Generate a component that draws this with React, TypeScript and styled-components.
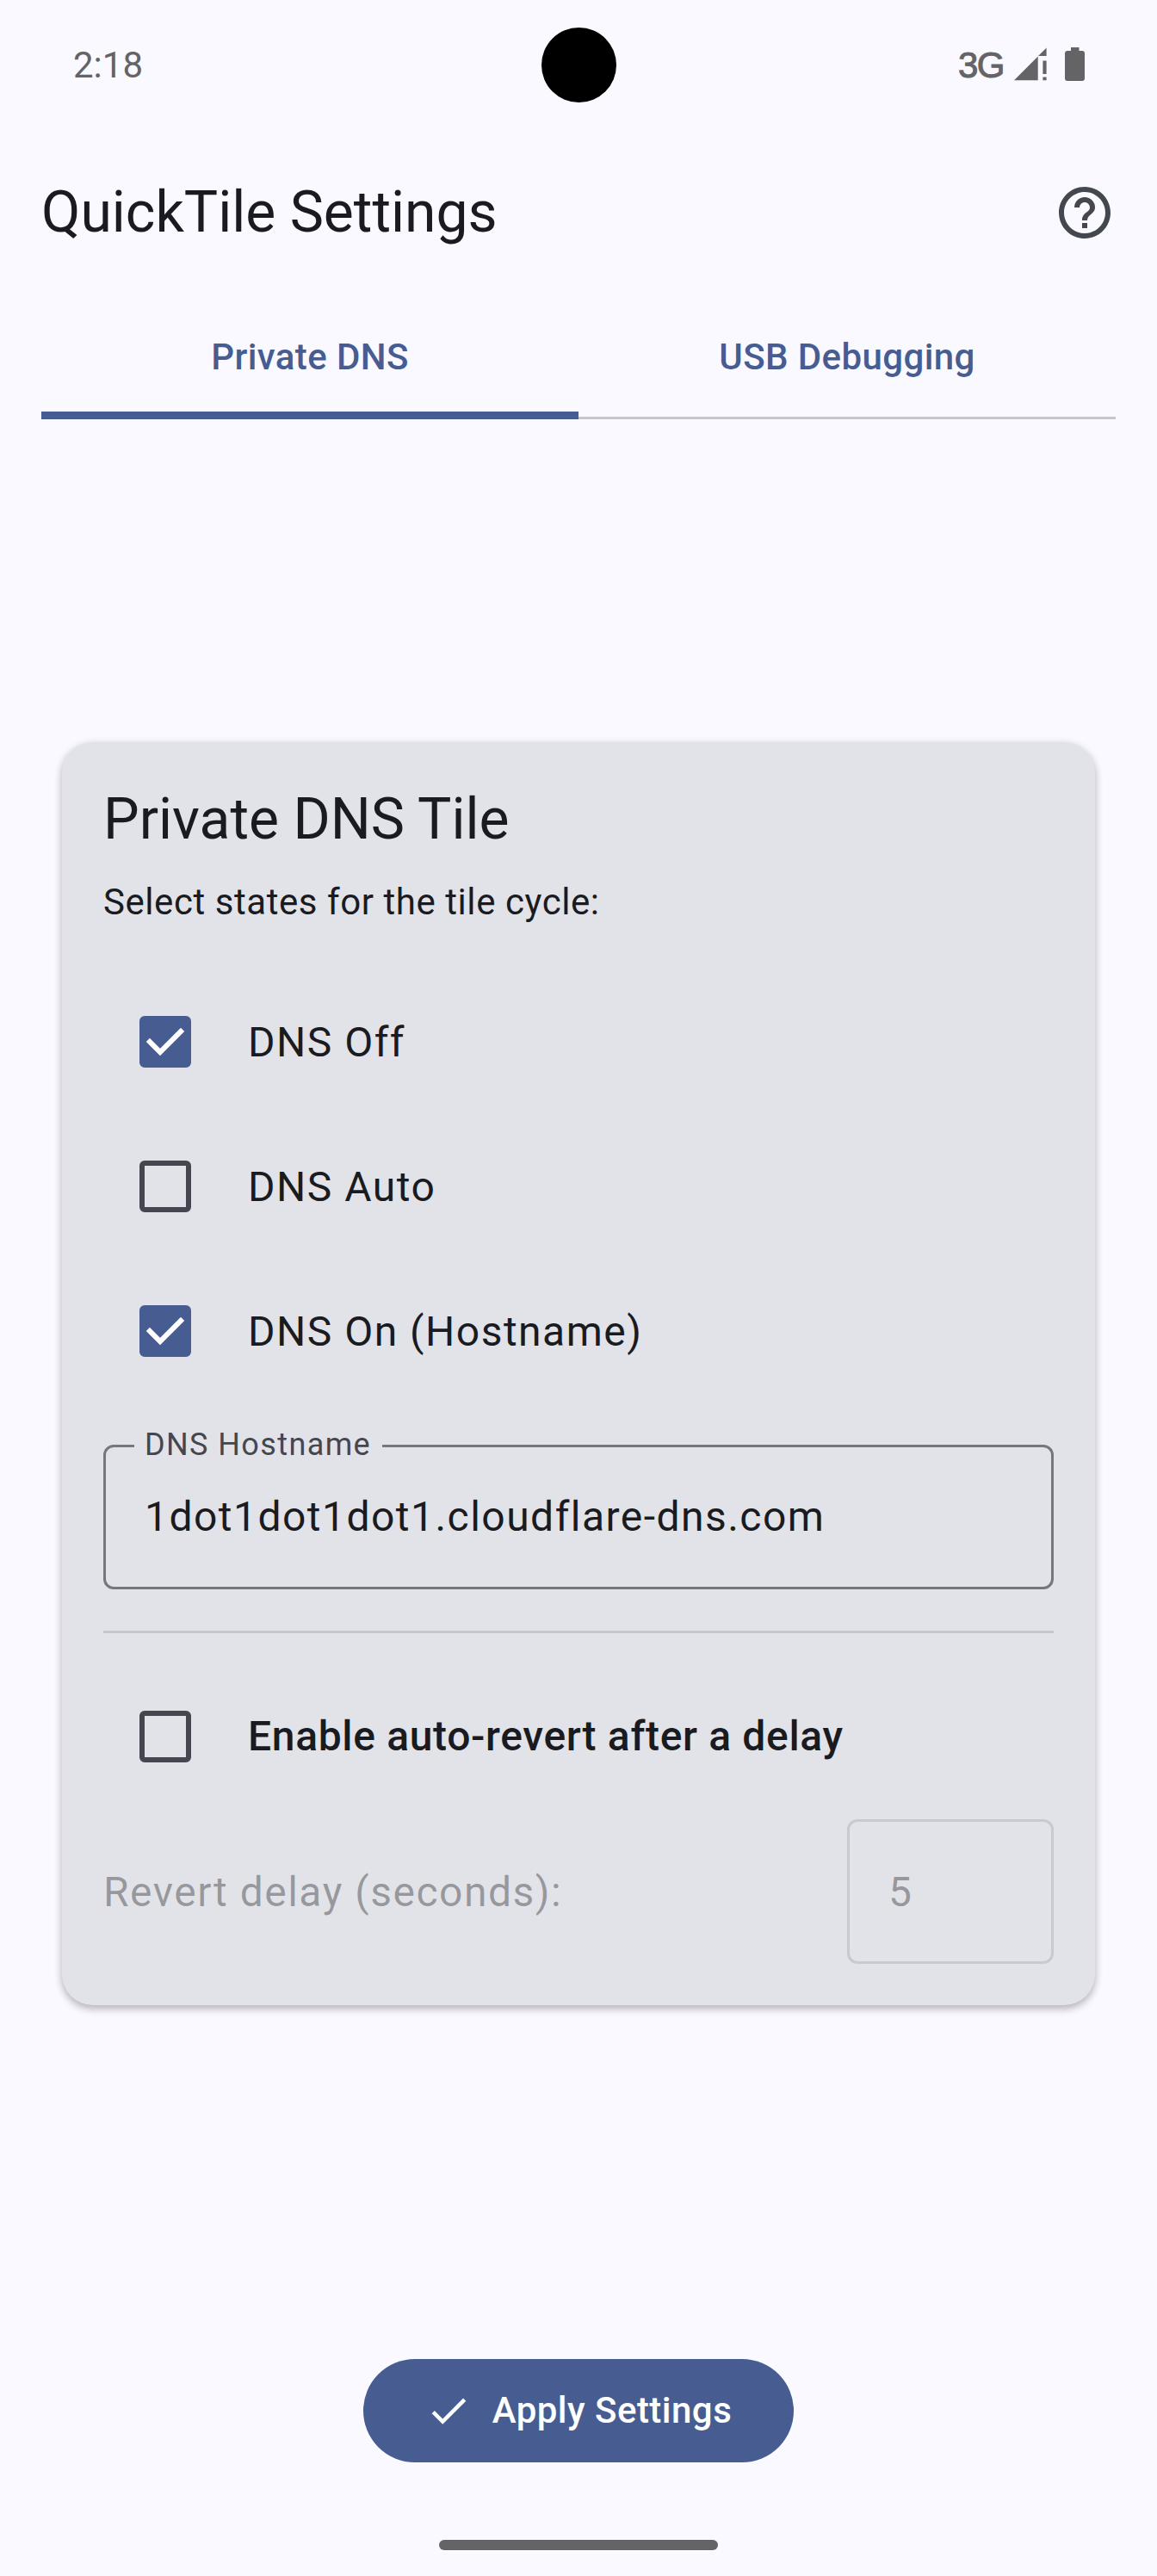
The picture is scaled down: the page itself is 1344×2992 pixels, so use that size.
import React from "react";
import styled, { createGlobalStyle } from "styled-components";

const color = {
  surface: "#f9f9ff",
  container: "#e2e3e8",
  primary: "#475d92",
  onSurface: "#1a1b20",
  onSurfaceVariant: "#44474f",
  outline: "#757780",
  outlineVariant: "#c5c6d0",
  system: "#646466",
};

const GlobalStyle = createGlobalStyle`
  * { box-sizing: border-box; }
  body { margin: 0; background: ${color.surface}; }
`;

const Screen = styled.div`
  position: relative;
  display: flex;
  flex-direction: column;
  width: 1344px;
  height: 2992px;
  background: ${color.surface};
  color: ${color.onSurface};
  font-family: Roboto, "Liberation Sans", sans-serif;
  overflow: hidden;
`;

const StatusBar = styled.header`
  display: flex;
  align-items: center;
  justify-content: space-between;
  height: 150px;
  padding: 0 84px 0 85px;
  color: ${color.system};
`;

const Clock = styled.span`
  padding-top: 2px;
  font-size: 42px;
  line-height: 50px;
`;

const StatusIcons = styled.div`
  display: flex;
  align-items: center;
`;

const Network = styled.span`
  margin-right: 11px;
  padding-top: 2px;
  font-family: "Liberation Sans", Roboto, sans-serif;
  font-size: 42px;
  line-height: 50px;
  letter-spacing: -1.5px;
  -webkit-text-stroke: 1px ${color.system};
`;

const StatusGlyph = styled.svg`
  height: 40px;
  fill: ${color.system};
`;

const Camera = styled.div`
  position: absolute;
  left: 628.5px;
  top: 31.5px;
  width: 87px;
  height: 87px;
  border-radius: 50%;
  background: #000;
`;

const AppBar = styled.div`
  display: flex;
  align-items: center;
  justify-content: space-between;
  height: 194px;
  margin-bottom: -1px;
  padding: 0 48px;
`;

const Title = styled.h1`
  margin: 0;
  font-size: 66px;
  font-weight: 400;
  line-height: 84px;
`;

const HelpIcon = styled.svg`
  width: 72px;
  height: 72px;
  fill: ${color.onSurfaceVariant};
`;

const TabRow = styled.nav`
  display: flex;
  height: 144px;
  margin: 0 48px;
`;

const Tab = styled.button<{ $active?: boolean }>`
  flex: 1;
  padding: 0;
  border: 0;
  background: none;
  color: ${color.primary};
  font: 500 42px/60px Roboto, sans-serif;
  letter-spacing: 0.4px;
  box-shadow: inset 0 ${(p) => (p.$active ? `-9px ${color.primary}` : `-3px ${color.outlineVariant}`)};
`;

const Card = styled.main`
  display: flex;
  flex-direction: column;
  height: 1467px;
  margin: 375px 72px 0;
  padding: 48px;
  border-radius: 36px;
  background: ${color.container};
  box-shadow: 0 5px 8px rgba(60, 40, 50, 0.22), 0 2px 10px rgba(60, 40, 50, 0.16);
`;

const CardTitle = styled.h2`
  margin: 0 0 24px;
  font-size: 66px;
  font-weight: 400;
  line-height: 84px;
`;

const CardText = styled.p`
  margin: 0 0 48px;
  font-size: 42px;
  line-height: 60px;
  letter-spacing: 0.56px;
`;

const OptionRow = styled.label`
  display: flex;
  align-items: center;
  gap: 66px;
  height: 168px;
  padding-left: 42px;
`;

const Box = styled.span<{ $checked?: boolean }>`
  display: flex;
  width: 60px;
  height: 60px;
  border: 6px solid ${(p) => (p.$checked ? color.primary : color.onSurfaceVariant)};
  border-radius: 6px;
  background: ${(p) => (p.$checked ? color.primary : "transparent")};
`;

const Tick = styled.svg`
  flex: none;
  width: 60px;
  height: 60px;
  margin: -6px;
`;

const OptionText = styled.span<{ $strong?: boolean }>`
  padding-top: ${(p) => (p.$strong ? 0 : 2)}px;
  font-size: 48px;
  line-height: 72px;
  font-weight: ${(p) => (p.$strong ? 500 : 400)};
  letter-spacing: ${(p) => (p.$strong ? 0.66 : 1.5)}px;
`;

const HostField = styled.fieldset`
  height: 186px;
  min-width: 0;
  margin: 30px 0 48px;
  padding: 0 0 0 45px;
  border: 3px solid ${color.outline};
  border-radius: 12px;
`;

const HostLabel = styled.legend`
  height: 39px;
  margin-left: -12px;
  padding: 0 13px 0 12px;
  color: ${color.onSurfaceVariant};
  font-size: 36px;
  line-height: 36px;
  letter-spacing: 1.4px;
`;

const FieldValue = styled.div`
  padding-top: 2px;
  font-size: 48px;
  line-height: 72px;
  letter-spacing: 1.5px;
`;

const HostValue = styled(FieldValue)`
  margin-top: 25px;
  letter-spacing: 1.47px;
`;

const Divider = styled.hr`
  width: 100%;
  height: 3px;
  margin: 0 0 36px;
  border: 0;
  background: ${color.outlineVariant};
`;

const DelayRow = styled.div`
  display: flex;
  align-items: center;
  justify-content: space-between;
  height: 168px;
  margin-top: 12px;
  color: rgba(26, 27, 32, 0.38);
`;

const DelayField = styled.div`
  display: flex;
  align-items: center;
  width: 240px;
  height: 168px;
  padding-left: 45px;
  border: 3px solid rgba(26, 27, 32, 0.12);
  border-radius: 12px;
`;

const ApplyButton = styled.button`
  display: flex;
  align-items: center;
  align-self: center;
  gap: 24px;
  height: 120px;
  margin-top: 411px;
  padding: 0 72px;
  border: 0;
  border-radius: 60px;
  background: ${color.primary};
  color: #fff;
  font: 500 42px/60px Roboto, sans-serif;
  letter-spacing: 0.48px;
`;

const HomeBar = styled.div`
  align-self: center;
  width: 324px;
  height: 12px;
  margin-top: 90px;
  border-radius: 6px;
  background: ${color.system};
`;

function Option({ label, checked, strong }: { label: string; checked?: boolean; strong?: boolean }) {
  return (
    <OptionRow>
      <Box $checked={checked}>
        {checked && (
          <Tick viewBox="0 0 20 20" fill="none" stroke="#fff" strokeWidth="2" strokeLinecap="square">
            <path d="M4 10 8 14 16 6" />
          </Tick>
        )}
      </Box>
      <OptionText $strong={strong}>{label}</OptionText>
    </OptionRow>
  );
}

export default function App() {
  return (
    <Screen>
      <GlobalStyle />
      <StatusBar>
        <Clock>2:18</Clock>
        <StatusIcons>
          <Network>3G</Network>
          <StatusGlyph width="40" viewBox="0 0 40 40">
            <path d="M1 38.3 28.7 10.6V38.3ZM29 10 38.6.5V10ZM34.4 15.5h4.2V31h-4.2ZM34.4 34.5h4.2v3.8h-4.2Z" />
          </StatusGlyph>
          <StatusGlyph width="43" viewBox="0 0 43 40">
            <path d="M27 0h9.5v4H40q3 0 3 3v29q0 3-3 3H23q-3 0-3-3V7q0-3 3-3h4Z" />
          </StatusGlyph>
        </StatusIcons>
      </StatusBar>
      <Camera />
      <AppBar>
        <Title>QuickTile Settings</Title>
        <HelpIcon viewBox="0 0 24 24">
          <path d="M11 18h2v-2h-2v2zm1-16C6.48 2 2 6.48 2 12s4.48 10 10 10 10-4.48 10-10S17.52 2 12 2zm0 18c-4.41 0-8-3.59-8-8s3.59-8 8-8 8 3.59 8 8-3.59 8-8 8zm0-14c-2.21 0-4 1.79-4 4h2c0-1.1.9-2 2-2s2 .9 2 2c0 2-3 1.75-3 5h2c0-2.25 3-2.5 3-5 0-2.21-1.79-4-4-4z" />
        </HelpIcon>
      </AppBar>
      <TabRow>
        <Tab $active>Private DNS</Tab>
        <Tab>USB Debugging</Tab>
      </TabRow>
      <Card>
        <CardTitle>Private DNS Tile</CardTitle>
        <CardText>Select states for the tile cycle:</CardText>
        <Option label="DNS Off" checked />
        <Option label="DNS Auto" />
        <Option label="DNS On (Hostname)" checked />
        <HostField>
          <HostLabel>DNS Hostname</HostLabel>
          <HostValue>1dot1dot1dot1.cloudflare-dns.com</HostValue>
        </HostField>
        <Divider />
        <Option label="Enable auto-revert after a delay" strong />
        <DelayRow>
          <FieldValue>Revert delay (seconds):</FieldValue>
          <DelayField>
            <FieldValue>5</FieldValue>
          </DelayField>
        </DelayRow>
      </Card>
      <ApplyButton>
        <svg width="54" height="54" viewBox="0 0 24 24" fill="#fff">
          <path d="M9 16.17 4.83 12l-1.42 1.41L9 19 21 7l-1.41-1.41z" />
        </svg>
        Apply Settings
      </ApplyButton>
      <HomeBar />
    </Screen>
  );
}
